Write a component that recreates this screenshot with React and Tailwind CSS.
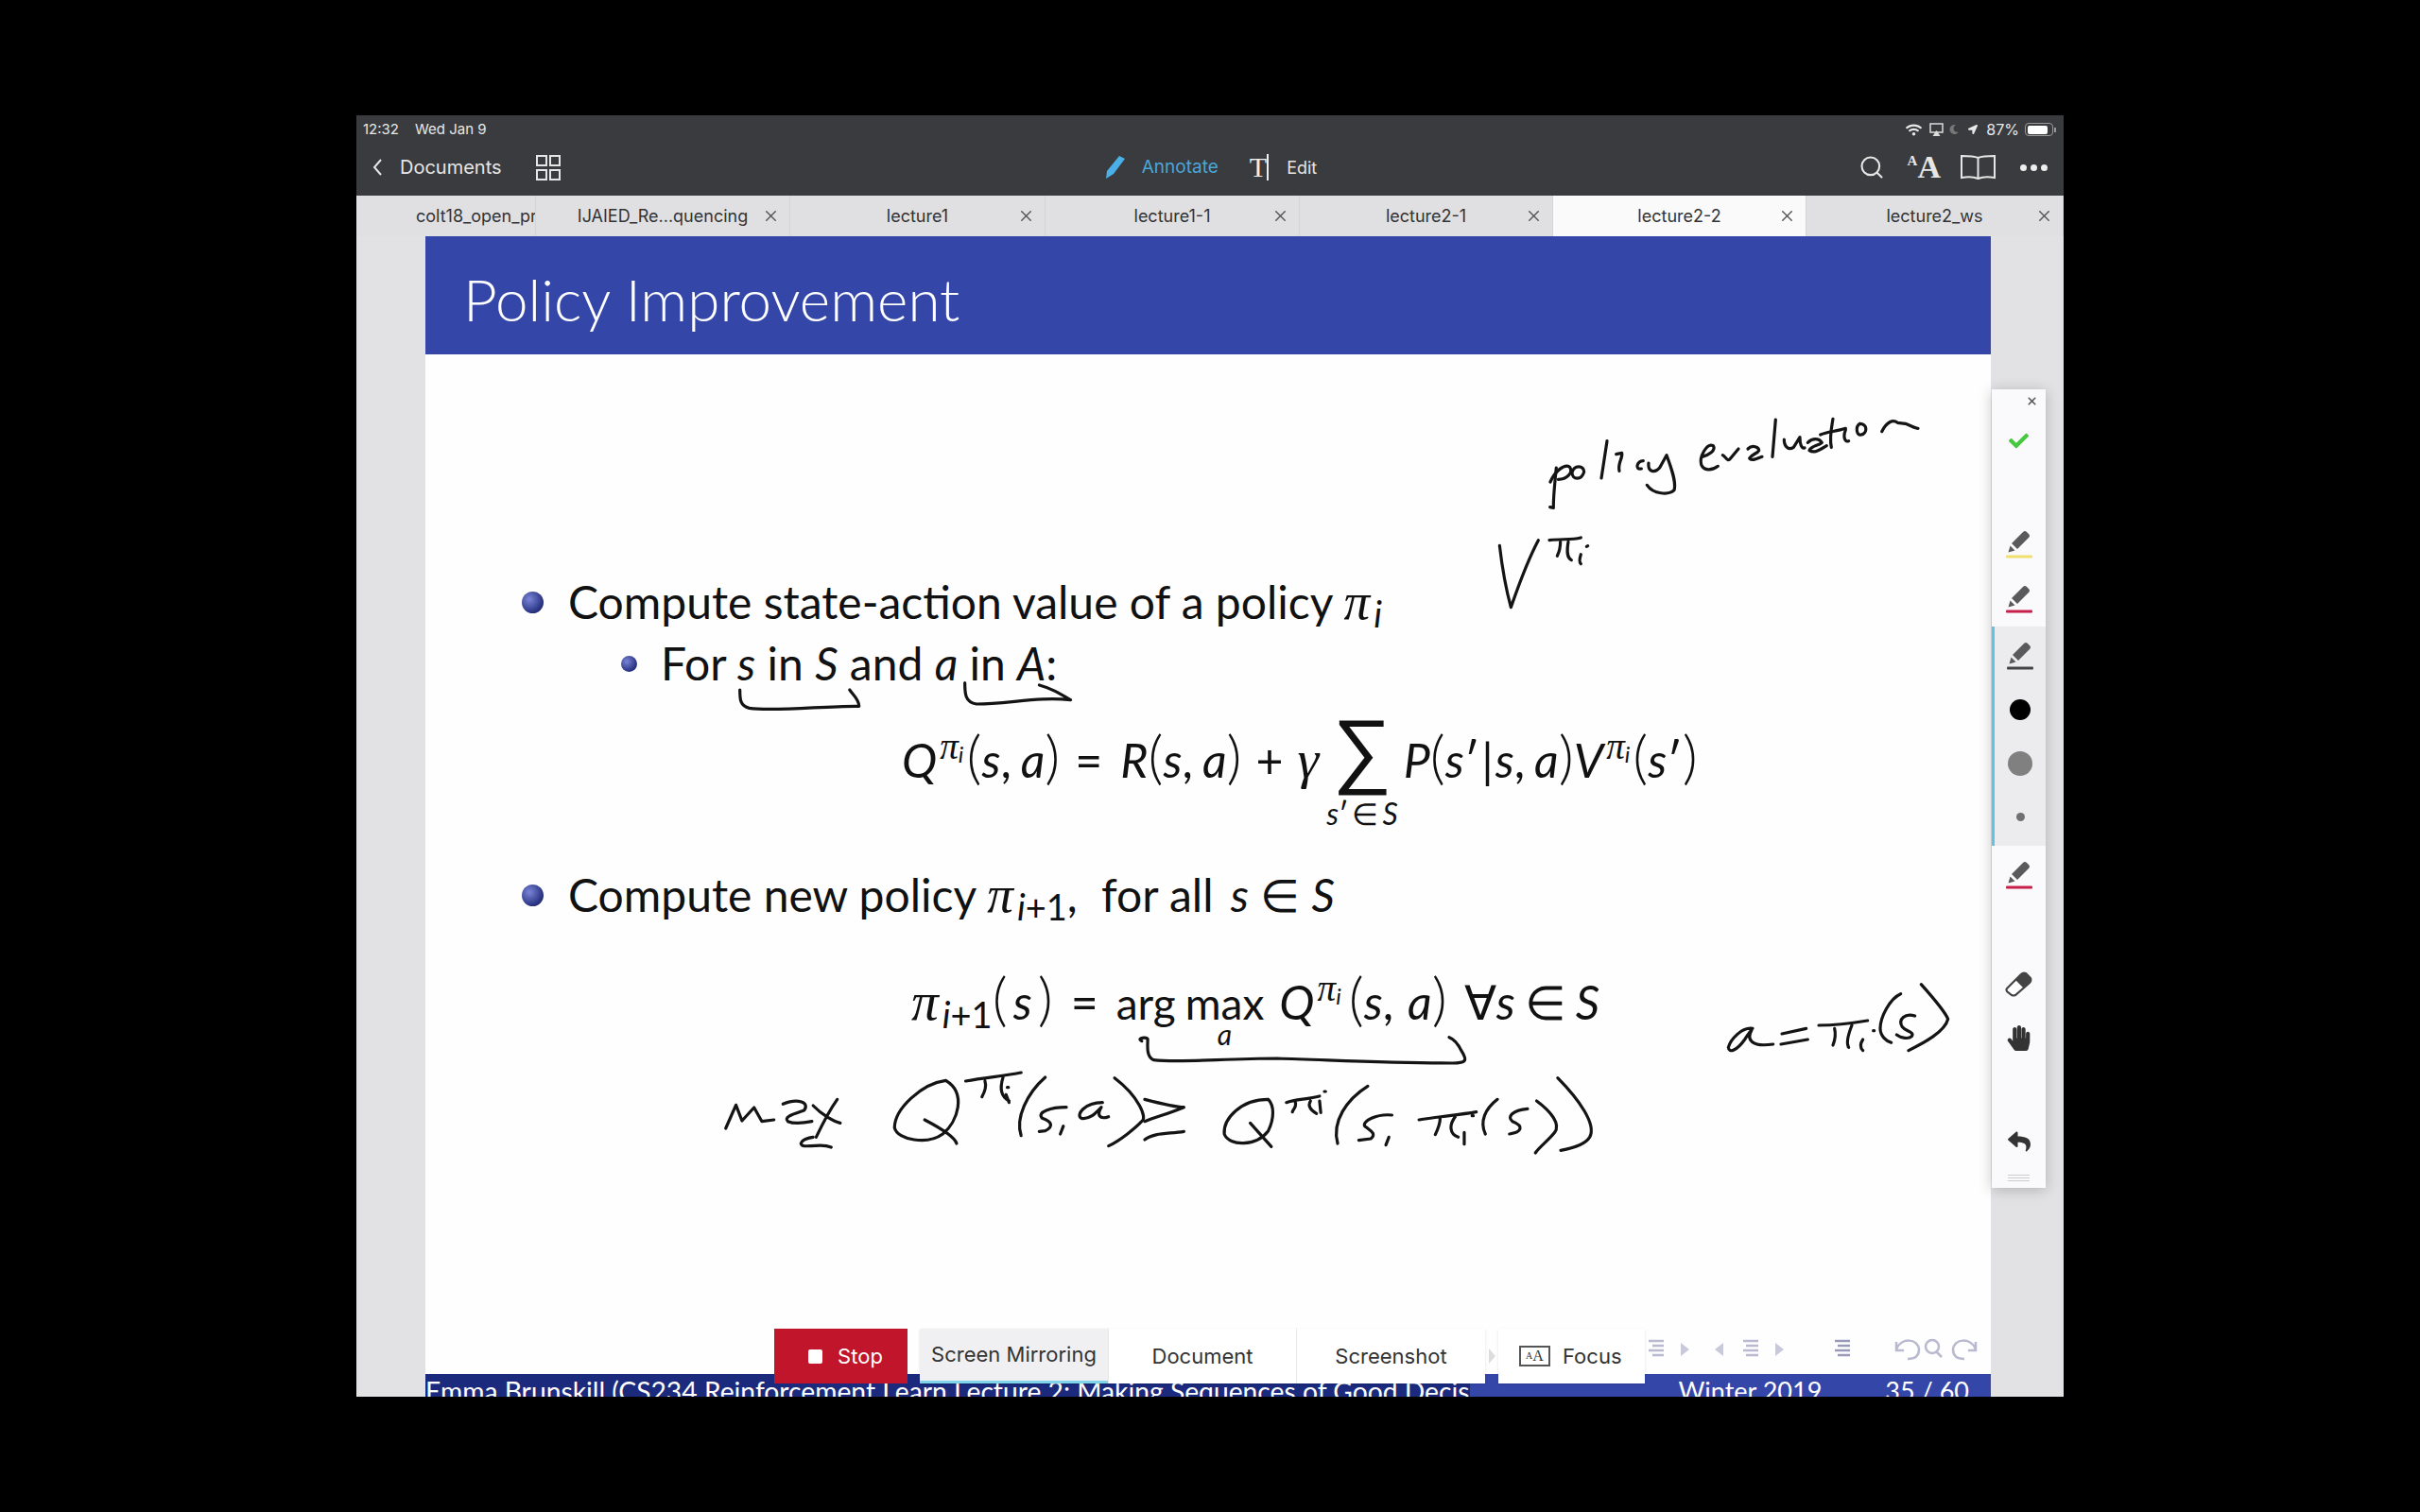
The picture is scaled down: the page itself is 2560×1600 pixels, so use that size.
import React from "react";
import { Search, X } from "lucide-react";
import { FaWifi, FaLocationArrow, FaMoon, FaHandPaper, FaReply, FaCheck } from "react-icons/fa";

const I = ({ children }) => <span className="italic">{children}</span>;
const Pi = ({ children = "π" }) => <span className="italic font-['Liberation_Serif',serif] text-[1.15em] leading-none">{children}</span>;
const PiI = () => (
  <span className="relative -top-[20px] ml-[3px] mr-[3px] text-[34px] leading-none">
    <Pi /><span className="relative top-[4px] text-[24px] italic">i</span>
  </span>
);
const Sub = ({ children }) => <span className="relative top-[9px] ml-[4px] text-[38px] leading-none">{children}</span>;
const L = () => <span className="text-[62px] font-light leading-none">(</span>;
const R = () => <span className="text-[62px] font-light leading-none">)</span>;
const Op = ({ children }) => <span className="mx-[15px]">{children}</span>;

function Pencil({ line }) {
  return (
    <svg width="32" height="32" viewBox="0 0 32 32">
      <path d="M8 16 L20 4 Q22 2 24 4 L26 6 Q28 8 26 10 L14 22 Z" fill="#5a5a5c" />
      <path d="M6.5 18.5 L11.5 23.5 L4.5 25.5 Z" fill="#5a5a5c" />
      <rect x="2" y="28.5" width="28" height="3" rx="1" fill={line} />
    </svg>
  );
}

function Handwriting() {
  const common = { fill: "none", stroke: "#141414", strokeWidth: 3.2, strokeLinecap: "round", strokeLinejoin: "round" };
  return (
    <svg className="pointer-events-none absolute inset-0 h-full w-full" viewBox="378 122 1806 1356">
      <g fill="none" stroke="#b9b9cf" strokeWidth="2.5">
        <path d="M1745 1419H1761M1749 1424H1761M1745 1429H1761M1749 1434H1761" />
        <path d="M1845 1419H1861M1848 1424H1861M1845 1429H1861M1848 1434H1861" />
        <path d="M1942 1419H1958M1945 1424H1958M1942 1429H1958M1945 1434H1958" stroke="#9a9ab8" />
        <path d="M2007 1428 C2012 1415 2030 1416 2031 1428 C2031 1437 2023 1438 2019 1438 M2007 1420 L2007 1429 L2015 1429" />
        <path d="M2055 1436 L2049 1430 M2052 1425 A7 7 0 1 1 2038 1425 A7 7 0 1 1 2052 1425" />
        <path d="M2091 1428 C2086 1415 2068 1416 2067 1428 C2067 1437 2075 1438 2079 1438 M2091 1420 L2091 1429 L2083 1429" />
      </g>
      <g fill="#c9c9da">
        <path d="M1779 1421 L1788 1428 L1779 1435Z" />
        <path d="M1824 1421 L1815 1428 L1824 1435Z" />
        <path d="M1879 1421 L1888 1428 L1879 1435Z" />
      </g>
      <g transform="translate(1560 420) scale(0.33333)" {...common}>
        <path vectorEffect="non-scaling-stroke" d="M262 225 C258 265 252 320 253 352 L242 350" />
        <path vectorEffect="non-scaling-stroke" d="M243 270 C258 235 288 212 304 222 C318 240 295 262 268 262" />
        <path vectorEffect="non-scaling-stroke" d="M312 240 C318 216 350 216 350 238 C342 266 312 264 312 240" />
        <path vectorEffect="non-scaling-stroke" d="M423 140 L405 258" />
        <path vectorEffect="non-scaling-stroke" d="M452 182 L470 178 C474 195 456 208 462 235" />
        <path vectorEffect="non-scaling-stroke" d="M538 203 C518 204 510 232 532 228" />
        <path vectorEffect="non-scaling-stroke" d="M555 210 C552 240 575 242 590 225 L612 185 C625 220 644 270 636 296 C620 312 570 310 550 280" />
        <path vectorEffect="non-scaling-stroke" d="M725 190 C745 185 770 170 760 155 C740 145 715 190 722 215 C730 235 755 235 775 220" />
        <path vectorEffect="non-scaling-stroke" d="M790 185 C800 190 805 208 815 195 L840 165" />
        <path vectorEffect="non-scaling-stroke" d="M870 165 C885 150 905 160 905 170 C900 180 885 180 875 195 C885 205 900 195 915 190" />
        <path vectorEffect="non-scaling-stroke" d="M958 72 L948 190" />
        <path vectorEffect="non-scaling-stroke" d="M985 135 C985 160 1000 170 1015 160 L1035 128 C1035 150 1040 165 1050 162" />
        <path vectorEffect="non-scaling-stroke" d="M1060 145 C1075 130 1095 130 1105 145 C1095 155 1070 155 1065 170 C1080 180 1095 170 1120 155" />
        <path vectorEffect="non-scaling-stroke" d="M1140 70 C1135 100 1128 130 1135 160" />
        <path vectorEffect="non-scaling-stroke" d="M1100 120 C1125 110 1150 110 1180 100" />
        <path vectorEffect="non-scaling-stroke" d="M1180 105 C1170 130 1180 145 1190 140" />
        <path vectorEffect="non-scaling-stroke" d="M1225 85 C1210 95 1215 125 1230 120 C1250 115 1250 85 1225 85" />
        <path vectorEffect="non-scaling-stroke" d="M1295 110 C1310 80 1330 70 1345 82 L1370 85 C1385 90 1400 100 1410 100" />
        <path vectorEffect="non-scaling-stroke" d="M82 472 C90 540 105 620 118 668 C135 620 165 530 205 455" />
        <path vectorEffect="non-scaling-stroke" d="M240 455 C280 450 310 455 340 447" />
        <path vectorEffect="non-scaling-stroke" d="M275 460 C275 480 270 495 265 505" />
        <path vectorEffect="non-scaling-stroke" d="M300 460 C295 490 295 510 310 518" />
        <path vectorEffect="non-scaling-stroke" d="M358 475 L362 473" />
        <path vectorEffect="non-scaling-stroke" d="M340 500 C335 515 335 525 340 530" />
      </g>
      <g transform="translate(1800 1020) scale(0.33333)" {...common}>
        <path vectorEffect="non-scaling-stroke" d="M165 205 C130 200 95 240 88 265 C90 285 115 275 140 240 C150 225 155 215 162 210 C145 240 160 265 230 255" />
        <path vectorEffect="non-scaling-stroke" d="M258 222 L335 205 M255 255 L340 240" />
        <path vectorEffect="non-scaling-stroke" d="M375 195 C420 195 470 190 530 180 M425 205 C430 225 425 245 420 258 M480 195 C470 220 460 250 470 265" />
        <path vectorEffect="non-scaling-stroke" d="M515 240 C505 255 505 265 515 275 M548 212 L551 212" />
        <path vectorEffect="non-scaling-stroke" d="M635 95 C600 110 570 170 570 205 C570 230 590 245 605 250" />
        <path vectorEffect="non-scaling-stroke" d="M680 165 C650 155 625 175 640 200 C650 215 680 215 670 230 C660 240 635 235 622 225" />
        <path vectorEffect="non-scaling-stroke" d="M700 65 C740 110 775 150 785 175 C775 215 710 250 660 275" />
      </g>
      <g transform="translate(740 990) scale(0.63776 0.33333)" {...common}>
        <path vectorEffect="non-scaling-stroke" d="M735 335 C725 325 745 320 745 330 C745 350 742 385 755 395 C800 405 870 390 960 390 C1050 395 1150 405 1250 405 C1275 405 1275 395 1265 365 C1260 345 1255 330 1245 323" />
        <path vectorEffect="non-scaling-stroke" d="M45 612 L62 538 L72 588 L92 546 L105 590 L125 585" />
        <path vectorEffect="non-scaling-stroke" d="M140 535 C165 515 185 530 175 555 C160 565 140 575 148 590 C160 600 175 595 188 590" />
        <path vectorEffect="non-scaling-stroke" d="M190 540 C205 570 225 590 235 595 M230 520 C215 560 205 600 195 640" />
        <path vectorEffect="non-scaling-stroke" d="M190 640 C170 645 165 665 175 668 C195 670 205 660 220 672" />
        <path vectorEffect="non-scaling-stroke" d="M410 460 C370 470 325 550 325 610 C330 650 380 665 405 630 C430 590 445 500 410 460 M375 585 C400 610 425 640 428 660" />
        <path vectorEffect="non-scaling-stroke" d="M443 462 C480 450 510 445 535 435 M475 462 C478 480 475 495 470 512 M505 450 C500 480 500 510 515 525 M512 482 L514 482 M510 505 L515 530" />
        <path vectorEffect="non-scaling-stroke" d="M575 450 C545 500 525 580 535 635" />
        <path vectorEffect="non-scaling-stroke" d="M610 545 C585 545 560 560 570 580 C585 590 590 605 575 620 L565 622 M605 605 L600 630" />
        <path vectorEffect="non-scaling-stroke" d="M670 530 C640 530 625 570 635 580 C650 585 660 560 668 545 C660 570 665 585 680 575" />
        <path vectorEffect="non-scaling-stroke" d="M690 452 C730 510 745 580 735 590 C725 610 700 650 680 668" />
        <path vectorEffect="non-scaling-stroke" d="M740 520 C770 535 790 545 805 545 C780 565 760 575 740 590 M740 648 C755 625 780 630 805 622" />
        <path vectorEffect="non-scaling-stroke" d="M945 520 C900 520 870 580 872 630 C880 670 925 670 945 620 C955 580 955 540 945 520 M915 595 L950 670" />
        <path vectorEffect="non-scaling-stroke" d="M975 530 C990 520 1010 520 1030 510 M990 530 C992 545 985 555 985 560 M1015 525 C1010 540 1015 555 1025 565 M1038 495 L1040 495 M1030 525 L1032 562" />
        <path vectorEffect="non-scaling-stroke" d="M1110 478 C1075 520 1050 590 1060 660" />
        <path vectorEffect="non-scaling-stroke" d="M1150 570 C1125 565 1100 590 1105 605 C1115 620 1125 630 1115 645 L1095 650 M1145 640 L1140 665" />
        <path vectorEffect="non-scaling-stroke" d="M1195 585 C1225 575 1260 570 1290 560 M1230 580 C1230 600 1225 620 1222 632 M1255 575 C1245 600 1245 630 1260 640 M1283 572 L1285 572 M1270 625 L1270 662" />
        <path vectorEffect="non-scaling-stroke" d="M1325 520 C1305 550 1295 590 1305 630" />
        <path vectorEffect="non-scaling-stroke" d="M1375 550 C1350 555 1340 575 1350 590 C1370 605 1365 625 1345 630" />
        <path vectorEffect="non-scaling-stroke" d="M1390 525 C1415 560 1430 600 1420 625 C1410 650 1395 670 1388 690" />
        <path vectorEffect="non-scaling-stroke" d="M1425 452 C1460 520 1490 600 1478 640 C1470 665 1450 675 1430 682" />
      </g>
      <g transform="translate(520 590) scale(0.82919 0.33333)" {...common}>
        <path vectorEffect="non-scaling-stroke" d="M318 420 C318 450 318 470 330 478 C360 490 430 470 470 472 C470 450 462 435 458 420" />
        <path vectorEffect="non-scaling-stroke" d="M605 398 C605 430 605 460 620 465 C660 465 700 440 740 452 C725 430 715 415 700 405" />
      </g>
    </svg>
  );
}

function Tab({ w, label, active, close = true, pad = "" }) {
  return (
    <div className={`relative flex h-full items-center justify-center overflow-hidden whitespace-nowrap border-r border-[#d4d4d6] ${w} ${active ? "bg-[#fafafa]" : ""} ${pad}`}>
      <span>{label}</span>
      {close && <X className="absolute right-[10px] top-[12px] text-[#555]" size={19} strokeWidth={1.8} />}
    </div>
  );
}

function Bullet({ big }) {
  return (
    <span className={`shrink-0 rounded-full bg-[radial-gradient(circle_at_35%_35%,#7a85d8,#25307f_70%)] ${big ? "mr-[26px] h-[23px] w-[23px]" : "mr-[25px] h-[17px] w-[17px]"}`} />
  );
}

export default function App() {
  return (
    <div className="flex h-screen w-full items-center justify-center bg-black font-['Inter',sans-serif]">
      <div className="relative flex h-[1356px] w-[1806px] flex-col overflow-hidden bg-[#e2e2e4]">
        {/* status + toolbar */}
        <div className="h-[85px] shrink-0 bg-[#3a3b3e] text-white">
          <div className="flex h-[25px] items-center justify-between pl-[7px] pr-[8px] pt-[5px] text-[15px] text-[#e8e8e8]">
            <div className="flex gap-[17px]">
              <span>12:32</span>
              <span>Wed Jan 9</span>
            </div>
            <div className="flex items-center">
              <FaWifi size={17} className="mr-[8px]" />
              <svg width="15" height="14" viewBox="0 0 15 14" className="mr-[6px]">
                <rect x="1" y="1" width="13" height="9" fill="none" stroke="#ddd" strokeWidth="1.5" />
                <path d="M3.5 14 L7.5 8 L11.5 14 Z" fill="#ddd" />
              </svg>
              <FaMoon size={10} className="mr-[10px] text-[#777]" />
              <FaLocationArrow size={10} className="mr-[9px]" />
              <span className="mr-[6px] text-[16px]">87%</span>
              <div className="flex h-[14px] w-[30px] rounded-[4px] border border-[#999] p-[1.5px]">
                <div className="h-full w-[85%] rounded-[2px] bg-white" />
              </div>
              <div className="ml-[1px] h-[5px] w-[2px] bg-[#999]" />
            </div>
          </div>
          <div className="grid h-[60px] grid-cols-[1fr_auto_1fr] items-center px-[17px] text-[20px] text-[#e6e6e6]">
            <div className="flex items-center">
              <svg width="11" height="18" viewBox="0 0 11 18" className="mr-[18px]">
                <path d="M9 1 L2 9 L9 17" fill="none" stroke="#e6e6e6" strokeWidth="2" />
              </svg>
              <span>Documents</span>
              <div className="ml-[36px] grid grid-cols-2 gap-x-[2px] gap-y-[3px]">
                <span className="h-[12px] w-[12px] border-2 border-[#e6e6e6]" />
                <span className="h-[12px] w-[12px] border-2 border-[#e6e6e6]" />
                <span className="h-[12px] w-[12px] border-2 border-[#e6e6e6]" />
                <span className="h-[12px] w-[12px] border-2 border-[#e6e6e6]" />
              </div>
            </div>
            <div className="flex items-center">
              <svg width="24" height="26" viewBox="0 0 24 26" className="mr-[17px]">
                <path d="M17 1 L23 4 L11 20 L3 25 L4 17 Z" fill="#4cb0e8" />
              </svg>
              <span className="text-[19px] text-[#4aa6d6]">Annotate</span>
              <span className="ml-[33px] font-['Liberation_Serif',serif] text-[30px] leading-none text-[#eee]">T</span>
              <span className="mr-[19px] h-[28px] w-[2px] bg-[#eee]" />
              <span className="text-[18px]">Edit</span>
            </div>
            <div className="flex items-center justify-end">
              <Search size={28} strokeWidth={1.8} className="mr-[2px]" />
              <span className="ml-[22px] self-end pb-[16px] font-['Liberation_Serif',serif] text-[15px] font-bold leading-none">A</span>
              <span className="font-['Liberation_Serif',serif] text-[34px] font-bold leading-none">A</span>
              <svg width="37" height="26" viewBox="0 0 37 26" className="ml-[21px]">
                <path d="M18.5 3 C14 1 6 1 1 1 V24 C6 23 14 23 18.5 25 C23 23 31 23 36 24 V1 C31 1 23 1 18.5 3 Z M18.5 3 V25" fill="none" stroke="#e6e6e6" strokeWidth="2" />
              </svg>
              <div className="ml-[26px] flex gap-[4px]">
                <span className="h-[7px] w-[7px] rounded-full bg-[#eee]" />
                <span className="h-[7px] w-[7px] rounded-full bg-[#eee]" />
                <span className="h-[7px] w-[7px] rounded-full bg-[#eee]" />
              </div>
            </div>
          </div>
        </div>

        {/* tabs */}
        <div className="flex h-[43px] shrink-0 items-stretch bg-[#e0e0e2] text-[18px] text-[#333]">
          <div className="flex h-full w-[190px] items-center overflow-hidden whitespace-nowrap border-r border-[#d4d4d6] pl-[63px]">
            <span>colt18_open_pr</span>
          </div>
          <Tab w="w-[269px]" label="IJAIED_Re...quencing" />
          <Tab w="w-[270px]" label="lecture1" />
          <Tab w="w-[269px]" label="lecture1-1" />
          <Tab w="w-[268px]" label="lecture2-1" />
          <Tab w="w-[268px]" label="lecture2-2" active />
          <Tab w="flex-1" label="lecture2_ws" />
        </div>

        {/* slide area */}
        <div className="flex min-h-0 flex-1 pl-[73px]">
          <div className="flex w-[1656px] flex-col bg-[#fefefe] font-['Lato',sans-serif] text-[#111]">
            <div className="flex h-[125px] shrink-0 items-center bg-[#3546a9] pl-[40px] pt-[7px] text-[62px] font-light text-white">
              Policy Improvement
            </div>
            <div className="flex min-h-0 flex-1 flex-col pt-[236px] text-[48px] leading-[52px]">
              <div className="ml-[102px] flex h-[52px] items-center">
                <Bullet big />
                <span>Compute state-action value of a policy <Pi /><Sub><I>i</I></Sub></span>
              </div>
              <div className="ml-[207px] mt-[13px] flex h-[52px] items-center">
                <Bullet />
                <span>For <I>s</I> in <I>S</I> and <I>a</I> in <I>A</I>:</span>
              </div>
              <div className="ml-[504px] mt-[33px] flex h-[110px] items-start whitespace-pre text-[50px]">
                <div className="flex items-baseline pt-[6px]">
                  <I>Q</I><PiI /><L /><I>s</I>,<span className="w-[10px]" /><I>a</I><R /><span className="ml-[16px] mr-[19px]">=</span><I>R</I><L /><I>s</I>,<span className="w-[10px]" /><I>a</I><R /><Op>+</Op><Pi>γ</Pi>
                  <span className="ml-[8px] inline-flex flex-col items-center">
                    <span className="font-['DejaVu_Sans',sans-serif] text-[88px] font-light leading-[52px]">∑</span>
                    <span className="mt-[27px] text-[32px] leading-[30px]"><I>s</I>′<span className="mx-[4px]">∈</span><I>S</I></span>
                  </span>
                  <span className="ml-[6px]"><I>P</I></span><L /><I>s</I>′<span className="mx-[2px]">|</span><I>s</I>,<span className="w-[10px]" /><I>a</I><R /><I>V</I><PiI /><L /><I>s</I>′<R />
                </div>
              </div>
              <div className="ml-[102px] mt-[50px] flex h-[52px] items-center">
                <Bullet big />
                <span>Compute new policy <Pi /><Sub><I>i</I>+1</Sub>,<span className="ml-[13px]"> for all </span><span className="ml-[6px]"><I>s</I></span> ∈ <I>S</I></span>
              </div>
              <div className="ml-[514px] mt-[51px] flex h-[52px] items-baseline whitespace-pre text-[50px]">
                <Pi /><Sub><I>i</I>+1</Sub><L /><span className="mx-[6px]"><I>s</I></span><R /><span className="mx-[19px]">=</span><span className="text-[46px]">arg</span>
                <span className="ml-[10px] inline-flex flex-col items-center">
                  <span className="text-[46px]">max</span>
                  <span className="-mt-[7px] text-[30px] leading-[26px]"><I>a</I></span>
                </span>
                <span className="ml-[16px]"><I>Q</I></span><PiI /><span className="ml-[5px]"><L /></span><I>s</I>,<span className="w-[15px]" /><I>a</I><span className="mr-[4px]"><R /></span><span className="ml-[14px]">∀</span><I>s</I><span className="mx-[10px]">∈</span><I>S</I>
              </div>
            </div>
            <div className="flex h-[24px] shrink-0 overflow-hidden text-[28.25px] leading-[28px] text-white">
              <div className="h-full w-[1105px] overflow-hidden whitespace-nowrap bg-[#1b2a7d] pt-[4px]">
                Emma Brunskill (CS234 Reinforcement Learn Lecture 2: Making Sequences of Good Decis
              </div>
              <div className="flex flex-1 justify-end gap-[67px] whitespace-pre bg-[#3546a9] pr-[23px] pt-[4px] text-[27px]">
                <span>Winter 2019</span>
                <span>35 / 60</span>
              </div>
            </div>
          </div>
        </div>

        <Handwriting />

        {/* floating bottom bar */}
        <div className="absolute bottom-[14px] left-[442px] flex h-[58px] items-stretch text-[22px] text-[#333]">
          <div className="flex w-[141px] items-center justify-center gap-[16px] bg-[#c0152a] pl-[10px] text-white">
            <span className="h-[15px] w-[15px] rounded-[2px] bg-white" />
            <span>Stop</span>
          </div>
          <div className="ml-[13px] flex w-[598px] bg-white shadow-sm">
            <div className="flex w-[199px] items-center justify-center border-b-[3px] border-[#7fd6ea] bg-[#f0f0f2]">Screen Mirroring</div>
            <div className="flex w-[199px] items-center justify-center border-l border-[#e8e8e8]">Document</div>
            <div className="flex w-[200px] items-center justify-center border-l border-[#e8e8e8]">Screenshot</div>
          </div>
          <div className="flex w-[14px] items-center justify-center">
            <span className="h-0 w-0 border-y-[8px] border-l-[7px] border-y-transparent border-l-[#dcdcdc]" />
          </div>
          <div className="flex w-[155px] items-center bg-white pl-[22px] shadow-sm">
            <span className="flex h-[22px] w-[33px] items-center justify-center border-2 border-[#555] font-['Liberation_Serif',serif] leading-none">
              <span className="text-[10px]">A</span><span className="text-[16px]">A</span>
            </span>
            <span className="ml-[13px]">Focus</span>
          </div>
        </div>

        {/* annotation toolbar */}
        <div className="absolute left-[1730px] top-[290px] flex h-[845px] w-[57px] flex-col items-center bg-[#faf9fb] shadow-[0_2px_14px_rgba(0,0,0,0.22)]">
          <div className="flex h-[24px] w-full justify-end pr-[8px] pt-[6px]">
            <X size={13} strokeWidth={3} className="text-[#555]" />
          </div>
          <FaCheck size={21} className="mt-[20px] text-[#46c83e]" />
          <div className="mt-[82px]"><Pencil line="#f0e070" /></div>
          <div className="mt-[26px]"><Pencil line="#c81e4a" /></div>
          <div className="mt-[14px] flex h-[232px] w-full flex-col items-center border-l-[3px] border-[#5cc4e8] bg-[#ececee] pt-[14px]">
            <Pencil line="#444" />
            <span className="mt-[31px] h-[22px] w-[22px] rounded-full bg-black" />
            <span className="mt-[33px] h-[26px] w-[26px] rounded-full bg-[#808080]" />
            <span className="mt-[39px] h-[9px] w-[9px] rounded-full bg-[#707070]" />
          </div>
          <div className="mt-[14px]"><Pencil line="#c81e4a" /></div>
          <svg width="30" height="28" viewBox="0 0 30 28" className="mt-[86px]">
            <path d="M2 19 L17 4 Q19 2 22 3 L27 8 Q28 11 26 13 L11 26 Q9 27 7 26 L2 22 Q1 20 2 19 Z" fill="#fff" stroke="#444" strokeWidth="2.2" />
            <path d="M11 10 L17 4 Q19 2 22 3 L27 8 Q28 11 26 13 L20 19 Z" fill="#444" />
          </svg>
          <FaHandPaper size={27} className="mt-[30px] text-[#333]" />
          <FaReply size={24} className="mt-[84px] text-[#333]" />
          <div className="mt-[23px] flex flex-col gap-[2px]">
            <span className="h-[1px] w-[23px] bg-[#ccc]" />
            <span className="h-[1px] w-[23px] bg-[#ccc]" />
            <span className="h-[1px] w-[23px] bg-[#ccc]" />
          </div>
        </div>
      </div>
    </div>
  );
}
